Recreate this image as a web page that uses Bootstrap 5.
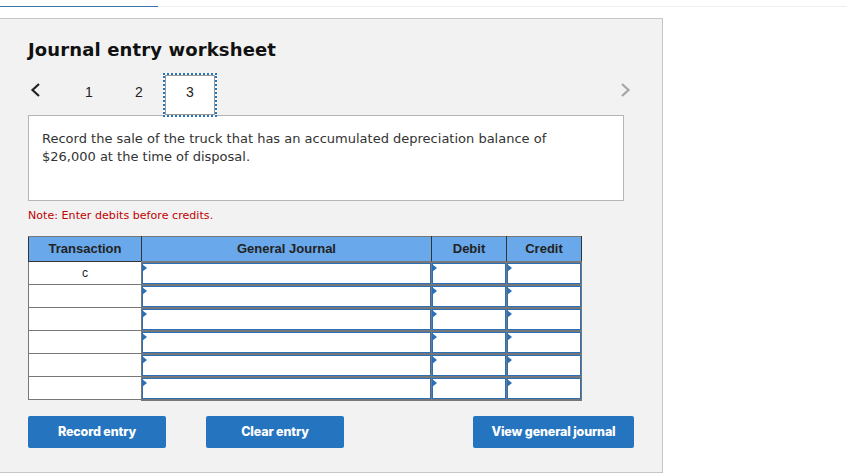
<!DOCTYPE html>
<html lang="en">
<head>
<meta charset="utf-8">
<title>Journal entry worksheet</title>
<link rel="stylesheet" href="https://cdn.jsdelivr.net/npm/bootstrap@5.3.0/dist/css/bootstrap.min.css">
<style>
html,body{background:#fff;overflow:hidden;height:474px}
.top-rule{height:1px;margin-top:6px;background:#eeeeee}
.top-rule-fill{width:158px;height:1px;background:#3f74a8}
.sheet{width:664px;height:455px;margin-top:11px;margin-left:-1px;background:#f2f2f2;border:1px solid #c6c6c6;padding:19px 28px 0 28px;font-family:"DejaVu Sans",Verdana,sans-serif}
.sheet-title{font-family:"DejaVu Sans",Verdana,sans-serif;font-weight:700;font-size:18px;letter-spacing:.13px;line-height:24px;color:#111;margin:0}
.pager{height:44px;margin-top:11px;font-family:"Liberation Sans",Arial,sans-serif;font-size:14px;color:#222}
.pg-arrow{width:12px;display:flex;align-items:center}
.pg-num{width:52px;text-align:center;line-height:38px;height:38px}
.pg-first{margin-left:23px}
.pg-second{width:48px}
.pg-active{width:54px;height:44px;line-height:30px;background:#fff;border:2px dotted #2574c0;outline:1px solid #999;outline-offset:-3px;text-align:center;padding-top:2px}
.pg-next{margin-left:auto;margin-right:3px}
.prompt{width:596px;height:86px;margin-top:-2px;background:#fff;border:1px solid #b5b5b5;padding:14px 13px 0;font-size:13px;line-height:18px;color:#333}
.note-line{font-size:11px;letter-spacing:.06px;line-height:14px;color:#c00000;margin:8px 0 0 0}
.je-grid{border-collapse:collapse;table-layout:fixed;width:553px;margin-top:13px;font-family:"Liberation Sans",Arial,sans-serif}
.je-grid th{height:25px;background:#69a8ea;border:1px solid #333;border-top-color:#777;text-align:center;font-size:13px;font-weight:700;color:#222;padding:0}
.je-grid td{height:23px;background:#fff;border:1px solid #777;padding:0;font-size:12px;text-align:center;color:#222;position:relative;line-height:1}
.je-grid td.entry{border-width:2px 1px;box-shadow:inset 0 0 0 1px #2a70b8}
.je-grid td.entry::before{content:"";position:absolute;left:0;top:1px;border-left:5px solid #2a70b8;border-top:4px solid transparent;border-bottom:4px solid transparent}
.actions{margin-top:15px;width:606px}
.act-btn{height:32px;width:138px;padding:1px 0 0;border:0;border-radius:2px;background:#2574c0;color:#fff;font-family:Inter,"Liberation Sans",sans-serif;font-size:12.5px;font-weight:800;letter-spacing:-.15px}
.act-second{margin-left:40px}
.act-wide{width:161px;margin-left:auto}
</style>
</head>
<body>
<div class="top-rule"><div class="top-rule-fill"></div></div>
<div class="sheet">
  <h1 class="sheet-title">Journal entry worksheet</h1>
  <div class="pager d-flex align-items-start">
    <span class="pg-arrow"><svg width="12" height="36" viewBox="0 0 12 36"><path d="M11 11 4.500 17l6.500 6" fill="none" stroke="#222" stroke-width="2.200"/></svg></span>
    <span class="pg-num pg-first">1</span>
    <span class="pg-num pg-second">2</span>
    <span class="pg-active">3</span>
    <span class="pg-arrow pg-next"><svg width="12" height="36" viewBox="0 0 12 36"><path d="M3 11l6.500 6L3 23" fill="none" stroke="#a5a5a5" stroke-width="2.200"/></svg></span>
  </div>
  <div class="prompt">Record the sale of the truck that has an accumulated depreciation balance of<br>$26,000 at the time of disposal.</div>
  <p class="note-line">Note: Enter debits before credits.</p>
  <table class="je-grid">
    <colgroup><col style="width:113px"><col style="width:290px"><col style="width:75px"><col style="width:75px"></colgroup>
    <thead><tr><th>Transaction</th><th>General Journal</th><th>Debit</th><th>Credit</th></tr></thead>
    <tbody>
      <tr><td>c</td><td class="entry"></td><td class="entry"></td><td class="entry"></td></tr>
      <tr><td></td><td class="entry"></td><td class="entry"></td><td class="entry"></td></tr>
      <tr><td></td><td class="entry"></td><td class="entry"></td><td class="entry"></td></tr>
      <tr><td></td><td class="entry"></td><td class="entry"></td><td class="entry"></td></tr>
      <tr><td></td><td class="entry"></td><td class="entry"></td><td class="entry"></td></tr>
      <tr><td></td><td class="entry"></td><td class="entry"></td><td class="entry"></td></tr>
    </tbody>
  </table>
  <div class="actions d-flex">
    <button type="button" class="btn act-btn">Record entry</button>
    <button type="button" class="btn act-btn act-second">Clear entry</button>
    <button type="button" class="btn act-btn act-wide">View general journal</button>
  </div>
</div>
<script src="https://cdn.jsdelivr.net/npm/bootstrap@5.3.0/dist/js/bootstrap.bundle.min.js"></script>
</body>
</html>
